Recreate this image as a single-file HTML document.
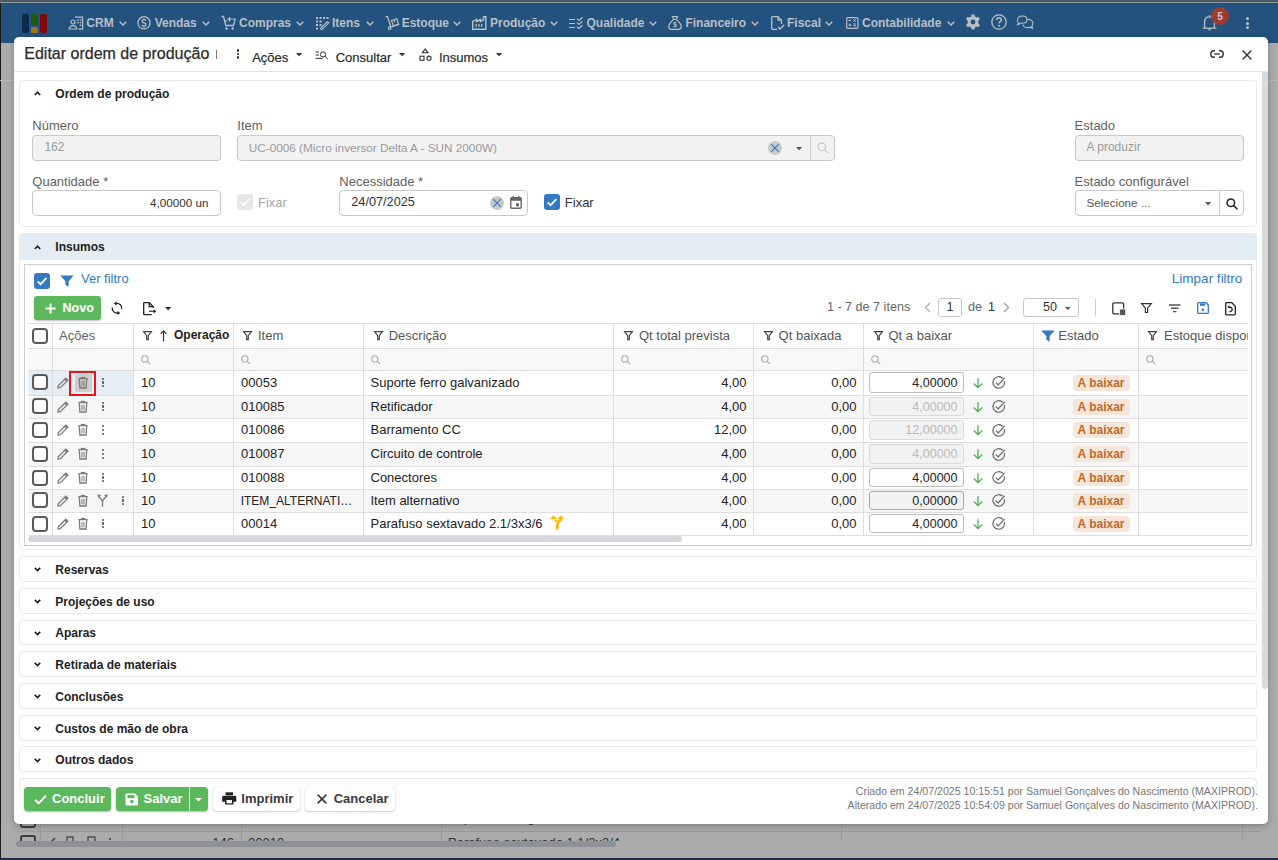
<!DOCTYPE html>
<html><head><meta charset="utf-8"><title>Editar ordem de produção</title>
<style>
html,body{margin:0;padding:0}
body{width:1278px;height:860px;overflow:hidden;position:relative;background:#ababab;font-family:"Liberation Sans", sans-serif}
.t{position:absolute;white-space:nowrap;line-height:1}
.b{position:absolute;box-sizing:border-box}
svg.b{overflow:visible}
</style></head><body>

<div class="b" style="left:0px;top:0px;width:1278px;height:2px;background:#4b5960"></div>
<div class="b" style="left:0px;top:2px;width:1278px;height:1px;background:#8d979c"></div>
<div class="b" style="left:0px;top:3px;width:1278px;height:40px;background:#24527e"></div>
<div class="b" style="left:16px;top:831px;width:1244px;height:1px;background:#999"></div>
<div class="b" style="left:40px;top:815px;width:1px;height:26px;background:#9b9b9b"></div>
<div class="b" style="left:122px;top:815px;width:1px;height:26px;background:#9b9b9b"></div>
<div class="b" style="left:241px;top:815px;width:1px;height:26px;background:#9b9b9b"></div>
<div class="b" style="left:441px;top:815px;width:1px;height:26px;background:#9b9b9b"></div>
<div class="b" style="left:841px;top:815px;width:1px;height:26px;background:#9b9b9b"></div>
<div class="b" style="left:1242px;top:815px;width:1px;height:26px;background:#9b9b9b"></div>
<div class="b" style="left:0;top:815px;width:1278px;height:26px;overflow:hidden">
<div class="b" style="left:20px;top:-2px;width:16px;height:15px;border:2px solid #3d3d3d;border-radius:3px"></div>
<div class="b" style="left:20px;top:20px;width:16px;height:15px;border:2px solid #3d3d3d;border-radius:3px"></div>
<div class="t" style="left:234.00px;top:21.00px;transform:translateX(-100%);font-size:13px;color:#2f2f2f;font-weight:normal;">146</div>
<div class="t" style="left:248.00px;top:21.00px;font-size:13px;color:#2f2f2f;font-weight:normal;">00010</div>
<div class="t" style="left:448.00px;top:21.00px;font-size:13px;color:#2f2f2f;font-weight:normal;">Parafuso sextavado 1 1/2x3/4</div>
<div class="t" style="left:448.00px;top:-4.00px;font-size:13px;color:#2f2f2f;font-weight:normal;">Suporte ferro galvanizado</div>
<svg class="b" style="left:48px;top:22px;" width="8" height="8" viewBox="0 0 8 8"><path d="M1 7 L7 1" stroke="#3d3d3d" stroke-width="1.5"/></svg>
<svg class="b" style="left:66px;top:21px;" width="8" height="8" viewBox="0 0 8 8"><rect x="1" y="1" width="6" height="7" fill="none" stroke="#3d3d3d" stroke-width="1.2"/></svg>
<svg class="b" style="left:87px;top:21px;" width="9" height="8" viewBox="0 0 9 8"><rect x="1" y="1" width="7" height="6" fill="none" stroke="#3d3d3d" stroke-width="1.2"/></svg>
<div class="b" style="left:109px;top:23px;width:2px;height:2px;background:#3d3d3d;border-radius:50%"></div>
</div>
<div class="b" style="left:16px;top:841px;width:600px;height:6px;background:#8e9297;border-radius:3px"></div>
<div class="b" style="left:0px;top:3px;width:1px;height:857px;background:#1c1c1c"></div>
<div class="b" style="left:0px;top:858px;width:1278px;height:2px;background:#1c2b46"></div>
<div class="b" style="left:22px;top:13.5px;width:7px;height:19.0px;background:#0c2a4b;border-radius:2px"></div>
<div class="b" style="left:31px;top:13.5px;width:7px;height:11.7px;background:#1f5a12;border-radius:2px"></div>
<div class="b" style="left:31px;top:27px;width:7px;height:5.5px;background:#a3721a;border-radius:1px"></div>
<div class="b" style="left:40px;top:13.5px;width:7px;height:19.0px;background:#820808;border-radius:2px"></div>
<div class="t" style="left:86.30px;top:17.14px;font-size:12px;color:#b8bfc7;font-weight:bold;">CRM</div>
<svg class="b" style="left:118.7px;top:21px;" width="8" height="5" viewBox="0 0 8 5"><path d="M0.7 0.7 L4 4 L7.3 0.7" fill="none" stroke="#b8bfc7" stroke-width="1.5"/></svg>
<div class="t" style="left:154.70px;top:17.14px;font-size:12px;color:#b8bfc7;font-weight:bold;">Vendas</div>
<svg class="b" style="left:202px;top:21px;" width="8" height="5" viewBox="0 0 8 5"><path d="M0.7 0.7 L4 4 L7.3 0.7" fill="none" stroke="#b8bfc7" stroke-width="1.5"/></svg>
<div class="t" style="left:239.00px;top:17.14px;font-size:12px;color:#b8bfc7;font-weight:bold;">Compras</div>
<svg class="b" style="left:295.5px;top:21px;" width="8" height="5" viewBox="0 0 8 5"><path d="M0.7 0.7 L4 4 L7.3 0.7" fill="none" stroke="#b8bfc7" stroke-width="1.5"/></svg>
<div class="t" style="left:332.00px;top:17.14px;font-size:12px;color:#b8bfc7;font-weight:bold;">Itens</div>
<svg class="b" style="left:365.6px;top:21px;" width="8" height="5" viewBox="0 0 8 5"><path d="M0.7 0.7 L4 4 L7.3 0.7" fill="none" stroke="#b8bfc7" stroke-width="1.5"/></svg>
<div class="t" style="left:401.70px;top:17.14px;font-size:12px;color:#b8bfc7;font-weight:bold;">Estoque</div>
<svg class="b" style="left:453px;top:21px;" width="8" height="5" viewBox="0 0 8 5"><path d="M0.7 0.7 L4 4 L7.3 0.7" fill="none" stroke="#b8bfc7" stroke-width="1.5"/></svg>
<div class="t" style="left:490.00px;top:17.14px;font-size:12px;color:#b8bfc7;font-weight:bold;">Produção</div>
<svg class="b" style="left:549.5px;top:21px;" width="8" height="5" viewBox="0 0 8 5"><path d="M0.7 0.7 L4 4 L7.3 0.7" fill="none" stroke="#b8bfc7" stroke-width="1.5"/></svg>
<div class="t" style="left:586.50px;top:17.14px;font-size:12px;color:#b8bfc7;font-weight:bold;">Qualidade</div>
<svg class="b" style="left:648.8px;top:21px;" width="8" height="5" viewBox="0 0 8 5"><path d="M0.7 0.7 L4 4 L7.3 0.7" fill="none" stroke="#b8bfc7" stroke-width="1.5"/></svg>
<div class="t" style="left:685.40px;top:17.14px;font-size:12px;color:#b8bfc7;font-weight:bold;">Financeiro</div>
<svg class="b" style="left:750.5px;top:21px;" width="8" height="5" viewBox="0 0 8 5"><path d="M0.7 0.7 L4 4 L7.3 0.7" fill="none" stroke="#b8bfc7" stroke-width="1.5"/></svg>
<div class="t" style="left:787.00px;top:17.14px;font-size:12px;color:#b8bfc7;font-weight:bold;">Fiscal</div>
<svg class="b" style="left:825px;top:21px;" width="8" height="5" viewBox="0 0 8 5"><path d="M0.7 0.7 L4 4 L7.3 0.7" fill="none" stroke="#b8bfc7" stroke-width="1.5"/></svg>
<div class="t" style="left:862.00px;top:17.14px;font-size:12px;color:#b8bfc7;font-weight:bold;">Contabilidade</div>
<svg class="b" style="left:946.8px;top:21px;" width="8" height="5" viewBox="0 0 8 5"><path d="M0.7 0.7 L4 4 L7.3 0.7" fill="none" stroke="#b8bfc7" stroke-width="1.5"/></svg>
<svg class="b" style="left:68px;top:16px;" width="16" height="14" viewBox="0 0 16 14"><g fill="none" stroke="#b8bfc7" stroke-width="1.2"><circle cx="5" cy="6" r="2"/><path d="M1.2 13 Q1.5 9.6 5 9.6 Q8.5 9.6 8.8 13 Z"/><path d="M7 1.2 H14.6 V13.2 H10.5"/></g><g fill="#b8bfc7"><rect x="9.3" y="3.4" width="1.6" height="1.3"/><rect x="11.8" y="3.4" width="1.6" height="1.3"/><rect x="9.3" y="6" width="1.6" height="1.3"/><rect x="11.8" y="6" width="1.6" height="1.3"/><rect x="11.8" y="8.6" width="1.6" height="1.3"/></g></svg>
<svg class="b" style="left:137px;top:16px;" width="14" height="14" viewBox="0 0 14 14"><circle cx="7" cy="6.8" r="6.1" fill="none" stroke="#b8bfc7" stroke-width="1.3"/><path d="M9 4.6 Q8.6 3.6 7 3.6 Q5 3.6 5 5.2 Q5 6.4 7 6.8 Q9 7.2 9 8.6 Q9 10.2 7 10.2 Q5.3 10.2 4.9 9" fill="none" stroke="#b8bfc7" stroke-width="1.2"/><path d="M7 2.4 V3.6 M7 10.2 V11.4" stroke="#b8bfc7" stroke-width="1.2"/></svg>
<svg class="b" style="left:221px;top:15px;" width="15" height="15" viewBox="0 0 15 15"><g fill="none" stroke="#b8bfc7" stroke-width="1.3"><path d="M0.5 1.5 H2.5 L4.8 10.5 H12.5 L14 4.2 H11.5"/><path d="M3.5 6 H6"/><path d="M8.5 2 V6.5 M6.3 4.2 H10.7"/></g><circle cx="5.5" cy="13.5" r="1.2" fill="#b8bfc7"/><circle cx="11.8" cy="13.5" r="1.2" fill="#b8bfc7"/></svg>
<svg class="b" style="left:316px;top:17px;" width="13" height="13" viewBox="0 0 13 13"><g fill="#b8bfc7"><rect x="0" y="0" width="2" height="2"/><rect x="3.5" y="0" width="2" height="2"/><rect x="7" y="0" width="2" height="2"/><rect x="10.5" y="0" width="2" height="2"/><rect x="0" y="3.5" width="2" height="2"/><rect x="3.5" y="3.5" width="2" height="2"/><rect x="0" y="7" width="2" height="2"/><rect x="0" y="10.5" width="2" height="2"/><rect x="3.5" y="7" width="2" height="2"/></g><path d="M4.5 11.5 L11.5 4.5 L12.8 5.8 L5.8 12.8 Z" fill="none" stroke="#b8bfc7" stroke-width="1.1"/></svg>
<svg class="b" style="left:385px;top:16px;" width="15" height="14" viewBox="0 0 15 14"><g fill="none" stroke="#b8bfc7" stroke-width="1.2"><path d="M0.5 0.8 L2.5 0.5 L5.8 11"/><circle cx="4.6" cy="12.2" r="1.3"/><path d="M6 11 L14.2 8.4"/><path d="M6.5 4.5 L11.8 2.8 L13.6 8.2 L8.3 9.9 Z"/><path d="M9 3.7 L9.8 6.2"/></g></svg>
<svg class="b" style="left:472px;top:16px;" width="15" height="14" viewBox="0 0 15 14"><g fill="none" stroke="#b8bfc7" stroke-width="1.4"><path d="M0.7 13.3 V5.5 L4.5 3.5 V5.5 L8.5 3.5 V5.5 L11.5 3.8 V0.7 H13.8 V13.3 Z"/></g><g fill="#b8bfc7"><rect x="3.5" y="8" width="1.3" height="2.8"/><rect x="6.3" y="8" width="1.3" height="2.8"/><rect x="9.1" y="8" width="1.3" height="2.8"/></g></svg>
<svg class="b" style="left:569px;top:17px;" width="15" height="13" viewBox="0 0 15 13"><g fill="none" stroke="#b8bfc7" stroke-width="1.2"><path d="M0 2.5 H6 M0 6.5 H6 M0 10.5 H6"/><path d="M8 1.6 L10 3.4 L13.5 0.3 M8 5.6 L10 7.4 L13.5 4.3 M8 9.6 L10 11.4 L13.5 8.3"/></g></svg>
<svg class="b" style="left:668px;top:16px;" width="14" height="14" viewBox="0 0 14 14"><g fill="none" stroke="#b8bfc7" stroke-width="1.2"><path d="M4.5 0.7 H9.5 L8.3 3.5 H5.7 Z"/><path d="M5.7 3.5 Q0.6 7.5 0.8 11 Q1 13.3 3.5 13.3 H10.5 Q13 13.3 13.2 11 Q13.4 7.5 8.3 3.5"/></g><text x="7" y="11.2" font-size="7" font-weight="bold" text-anchor="middle" fill="#b8bfc7" font-family="Liberation Sans">$</text></svg>
<svg class="b" style="left:771px;top:16px;" width="14" height="14" viewBox="0 0 14 14"><g fill="none" stroke="#b8bfc7" stroke-width="1.3"><path d="M6 13.3 H1.5 Q0.7 13.3 0.7 12.5 V1.5 Q0.7 0.7 1.5 0.7 H7 L10.5 4.2 V8"/><path d="M7 0.7 V4.2 H10.5"/><path d="M7 11 L9 13 L13.3 8.8"/></g></svg>
<svg class="b" style="left:846px;top:17px;" width="13" height="12" viewBox="0 0 13 12"><rect x="0.7" y="0.7" width="11.3" height="10.6" rx="1" fill="none" stroke="#b8bfc7" stroke-width="1.2"/><g stroke="#b8bfc7" stroke-width="1"><path d="M2.5 3.5 H5 M7.5 2.3 L9.8 4.7 M9.8 2.3 L7.5 4.7 M2.5 8 H5.3 M3.9 6.6 V9.4 M7.3 7 H10 M7.3 8.9 H10"/></g></svg>
<svg class="b" style="left:965px;top:14px;" width="16" height="16" viewBox="0 0 16 16"><path fill="#b8bfc7" d="M6.6 0.5 H9.4 L9.9 2.6 Q10.8 3 11.5 3.5 L13.5 2.8 L14.9 5.2 L13.3 6.6 Q13.4 8 13.3 9.4 L14.9 10.8 L13.5 13.2 L11.5 12.5 Q10.8 13 9.9 13.4 L9.4 15.5 H6.6 L6.1 13.4 Q5.2 13 4.5 12.5 L2.5 13.2 L1.1 10.8 L2.7 9.4 Q2.6 8 2.7 6.6 L1.1 5.2 L2.5 2.8 L4.5 3.5 Q5.2 3 6.1 2.6 Z M8 5.6 A2.4 2.4 0 1 0 8 10.4 A2.4 2.4 0 1 0 8 5.6 Z"/></svg>
<svg class="b" style="left:991px;top:14px;" width="16" height="16" viewBox="0 0 16 16"><circle cx="8" cy="8" r="7.2" fill="none" stroke="#b8bfc7" stroke-width="1.3"/><path d="M5.6 6 Q5.6 3.8 8 3.8 Q10.4 3.8 10.4 5.8 Q10.4 7.2 8.8 7.8 Q8 8.2 8 9.5" fill="none" stroke="#b8bfc7" stroke-width="1.5"/><circle cx="8" cy="11.7" r="1" fill="#b8bfc7"/></svg>
<svg class="b" style="left:1017px;top:15px;" width="17" height="14" viewBox="0 0 17 14"><g fill="none" stroke="#b8bfc7" stroke-width="1.1"><path d="M2 9.5 Q0.5 8 0.5 5.5 Q0.5 1 5.5 1 Q10 1 10 4.5 Q10 8.3 5.5 8.3 Q4 8.3 3 8 L0.8 9.6 Z"/><path d="M10.2 4.2 Q15.8 4.3 15.8 8.3 Q15.8 10.3 14.8 11.2 L15.6 13.2 L12.8 12.2 Q11.8 12.6 10.3 12.6 Q6.5 12.6 6 9.5"/></g></svg>
<svg class="b" style="left:1202px;top:14px;" width="15" height="18" viewBox="0 0 15 18"><g fill="none" stroke="#b8bfc7" stroke-width="1.3"><path d="M7.5 1 V2.5"/><path d="M2.6 14 V8 Q2.6 2.8 7.5 2.8 Q12.4 2.8 12.4 8 V14"/><path d="M0.6 14.2 H14.4"/></g><path d="M5.8 15.2 Q7.5 17.6 9.2 15.2 Z" fill="#b8bfc7"/></svg>
<div class="b" style="left:1211px;top:7px;width:18px;height:18px;border-radius:50%;background:#9d3b35"></div>
<div class="t" style="left:1220.00px;top:11.54px;font-size:10px;color:#d5c6c4;font-weight:bold;transform:translateX(-50%)">5</div>
<div class="b" style="left:1245.5px;top:17.1px;width:3px;height:3px;border-radius:50%;background:#b8bfc7"></div>
<div class="b" style="left:1245.5px;top:21.7px;width:3px;height:3px;border-radius:50%;background:#b8bfc7"></div>
<div class="b" style="left:1245.5px;top:26.3px;width:3px;height:3px;border-radius:50%;background:#b8bfc7"></div>
<div class="b" style="left:0px;top:80px;width:14px;height:1px;background:#b9b9b9"></div>
<div class="b" style="left:1268px;top:80px;width:10px;height:1px;background:#b9b9b9"></div>
<div class="b" style="left:14px;top:37px;width:1254px;height:787px;background:#fff;border-radius:5px;box-shadow:0 2px 6px rgba(0,0,0,.25)"></div>
<div class="t" style="left:24.30px;top:46.06px;font-size:16px;color:#2b2b2b;font-weight:normal;-webkit-text-stroke:0.25px #2b2b2b">Editar ordem de produção</div>
<div class="b" style="left:216px;top:50px;width:1px;height:9px;background:#777"></div>
<div class="b" style="left:236.6px;top:49.0px;width:2.5px;height:2.5px;border-radius:50%;background:#333"></div>
<div class="b" style="left:236.6px;top:52.699999999999996px;width:2.5px;height:2.5px;border-radius:50%;background:#333"></div>
<div class="b" style="left:236.6px;top:56.4px;width:2.5px;height:2.5px;border-radius:50%;background:#333"></div>
<svg class="b" style="left:295.8px;top:53.2px;" width="6.2" height="3.2" viewBox="0 0 6.2 3.2"><path d="M0 0 H6.2 L3.1 3.2 Z" fill="#333"/></svg>
<svg class="b" style="left:398.9px;top:53.2px;" width="6.2" height="3.2" viewBox="0 0 6.2 3.2"><path d="M0 0 H6.2 L3.1 3.2 Z" fill="#333"/></svg>
<svg class="b" style="left:496.1px;top:53.2px;" width="6.2" height="3.2" viewBox="0 0 6.2 3.2"><path d="M0 0 H6.2 L3.1 3.2 Z" fill="#333"/></svg>
<svg class="b" style="left:314.5px;top:50.5px;" width="14" height="9" viewBox="0 0 14 9"><g fill="none" stroke="#333" stroke-width="1"><path d="M0.5 1 H4 M0.5 4 H4 M0.5 7.4 H7.5"/><circle cx="8" cy="3.4" r="2.6"/><path d="M10 5.3 L12.8 8"/></g></svg>
<svg class="b" style="left:418.5px;top:47.5px;" width="13" height="13" viewBox="0 0 13 13"><g fill="none" stroke="#333" stroke-width="1.1"><path d="M6.2 1 L9 4.8 H3.4 Z"/><rect x="1" y="8.2" width="4" height="4"/><circle cx="10" cy="10.2" r="2.1"/></g></svg>
<svg class="b" style="left:1209.5px;top:50px;" width="14" height="8" viewBox="0 0 14 8"><g fill="none" stroke="#333" stroke-width="1.4"><path d="M5 0.8 H3.6 Q0.8 0.8 0.8 4 Q0.8 7.2 3.6 7.2 H5"/><path d="M9 0.8 H10.4 Q13.2 0.8 13.2 4 Q13.2 7.2 10.4 7.2 H9"/><path d="M4.2 4 H9.8"/></g></svg>
<svg class="b" style="left:1241.5px;top:49.5px;" width="10" height="10" viewBox="0 0 10 10"><path d="M0.6 0.6 L9.4 9.4 M9.4 0.6 L0.6 9.4" stroke="#333" stroke-width="1.4"/></svg>
<div class="t" style="left:252.20px;top:50.80px;font-size:13px;color:#2b2b2b;font-weight:normal;-webkit-text-stroke:0.2px #2b2b2b">Ações</div>
<div class="t" style="left:335.70px;top:50.80px;font-size:13px;color:#2b2b2b;font-weight:normal;-webkit-text-stroke:0.2px #2b2b2b">Consultar</div>
<div class="t" style="left:438.90px;top:50.80px;font-size:13px;color:#2b2b2b;font-weight:normal;-webkit-text-stroke:0.2px #2b2b2b">Insumos</div>
<div class="b" style="left:14px;top:71px;width:1254px;height:1px;background:#e3e3e3"></div>
<div class="b" style="left:1262px;top:72px;width:6px;height:617px;background:#d6dbe0;border-radius:0 0 3px 3px"></div>
<div class="b" style="left:19px;top:80px;width:1238px;height:147px;border:1px solid #ebebeb;border-radius:4px;background:#fff"></div>
<!--CHEV1-->
<div class="t" style="left:55.30px;top:87.84px;font-size:12px;color:#222;font-weight:bold;">Ordem de produção</div>
<div class="t" style="left:32.30px;top:119.00px;font-size:13px;color:#5f5f5f;font-weight:normal;">Número</div>
<div class="t" style="left:237.30px;top:119.00px;font-size:13px;color:#5f5f5f;font-weight:normal;">Item</div>
<div class="t" style="left:1074.60px;top:119.00px;font-size:13px;color:#5f5f5f;font-weight:normal;">Estado</div>
<div class="b" style="left:32px;top:135px;width:189px;height:26px;background:#f2f2f2;border:1px solid #c9c9c9;border-radius:4px"></div>
<div class="t" style="left:44.40px;top:141.44px;font-size:12px;color:#9a9a9a;font-weight:normal;">162</div>
<div class="b" style="left:237px;top:135px;width:598px;height:26px;background:#f2f2f2;border:1px solid #c9c9c9;border-radius:4px"></div>
<div class="b" style="left:810px;top:135px;width:1px;height:26px;background:#c9c9c9"></div>
<div class="t" style="left:248.80px;top:141.65px;font-size:11.75px;color:#9a9a9a;font-weight:normal;">UC-0006 (Micro inversor Delta A - SUN 2000W)</div>
<div class="b" style="left:1075px;top:135px;width:169px;height:26px;background:#f2f2f2;border:1px solid #c9c9c9;border-radius:4px"></div>
<div class="t" style="left:1086.60px;top:141.44px;font-size:12px;color:#9a9a9a;font-weight:normal;">A produzir</div>
<div class="t" style="left:32.30px;top:175.30px;font-size:13px;color:#5f5f5f;font-weight:normal;">Quantidade *</div>
<div class="t" style="left:339.30px;top:175.30px;font-size:13px;color:#5f5f5f;font-weight:normal;">Necessidade *</div>
<div class="t" style="left:1074.60px;top:175.30px;font-size:13px;color:#5f5f5f;font-weight:normal;">Estado configurável</div>
<div class="b" style="left:32px;top:190px;width:189px;height:26px;background:#fff;border:1px solid #c9c9c9;border-radius:4px"></div>
<div class="t" style="left:208.50px;top:197.10px;transform:translateX(-100%);font-size:11.7px;color:#333;font-weight:normal;">4,00000 un</div>
<div class="b" style="left:237px;top:194px;width:16px;height:16px;background:#e6e6e6;border-radius:3px"></div>
<div class="t" style="left:258.00px;top:196.00px;font-size:13px;color:#a8a8a8;font-weight:normal;">Fixar</div>
<div class="b" style="left:339px;top:190px;width:189px;height:26px;background:#fff;border:1px solid #c9c9c9;border-radius:4px"></div>
<div class="t" style="left:351.30px;top:196.25px;font-size:12.7px;color:#333;font-weight:normal;">24/07/2025</div>
<div class="b" style="left:544px;top:194px;width:16px;height:16px;background:#3479c1;border-radius:3px"></div>
<div class="t" style="left:564.80px;top:196.00px;font-size:13px;color:#333;font-weight:normal;">Fixar</div>
<div class="b" style="left:1075px;top:190px;width:169px;height:26px;background:#fff;border:1px solid #c9c9c9;border-radius:4px"></div>
<div class="b" style="left:1219px;top:190px;width:1px;height:26px;background:#c9c9c9"></div>
<div class="t" style="left:1086.60px;top:197.18px;font-size:11.6px;color:#555;font-weight:normal;">Selecione ...</div>
<svg class="b" style="left:33.6px;top:91.3px;" width="7" height="5" viewBox="0 0 7 5"><path d="M0.8 4 L3.5 1.2 L6.2 4" fill="none" stroke="#222" stroke-width="1.7"/></svg>
<svg class="b" style="left:768px;top:140.5px;" width="14" height="14" viewBox="0 0 14 14"><circle cx="7" cy="7" r="7" fill="#c9c9c9"/><path d="M3.2 3.2 L10.8 10.8 M10.8 3.2 L3.2 10.8" stroke="#3479c1" stroke-width="1.15"/></svg>
<svg class="b" style="left:489.5px;top:196px;" width="14" height="14" viewBox="0 0 14 14"><circle cx="7" cy="7" r="7" fill="#c9c9c9"/><path d="M3.2 3.2 L10.8 10.8 M10.8 3.2 L3.2 10.8" stroke="#3479c1" stroke-width="1.15"/></svg>
<svg class="b" style="left:796px;top:146.7px;" width="6.2" height="3.3" viewBox="0 0 6.2 3.3"><path d="M0 0 H6.2 L3.1 3.3 Z" fill="#555"/></svg>
<svg class="b" style="left:816.5px;top:141.5px;" width="12" height="12" viewBox="0 0 12 12"><g fill="none" stroke="#cdcdcd" stroke-width="1.3"><circle cx="4.8" cy="4.8" r="3.8"/><path d="M7.6 7.6 L11.3 11.3"/></g></svg>
<svg class="b" style="left:510px;top:196px;" width="12" height="13" viewBox="0 0 12 13"><rect x="0.8" y="1.8" width="10.4" height="10.4" rx="1" fill="none" stroke="#666" stroke-width="1.4"/><rect x="0.8" y="1.8" width="10.4" height="3" fill="#666"/><rect x="2.6" y="0" width="1.2" height="2" fill="#666"/><rect x="8.2" y="0" width="1.2" height="2" fill="#666"/><rect x="6.2" y="7.3" width="2.7" height="3" fill="#555"/></svg>
<svg class="b" style="left:237px;top:194px;" width="16" height="16" viewBox="0 0 16 16"><path d="M3.6 8.3 L6.6 11.2 L12.4 5" fill="none" stroke="#fff" stroke-width="1.8"/></svg>
<svg class="b" style="left:544px;top:194px;" width="16" height="16" viewBox="0 0 16 16"><path d="M3.6 8.3 L6.6 11.2 L12.4 5" fill="none" stroke="#fff" stroke-width="1.8"/></svg>
<svg class="b" style="left:1205px;top:201.5px;" width="6.2" height="3.4" viewBox="0 0 6.2 3.4"><path d="M0 0 H6.2 L3.1 3.4 Z" fill="#555"/></svg>
<svg class="b" style="left:1225.5px;top:197.5px;" width="13" height="12" viewBox="0 0 13 12"><g fill="none" stroke="#222" stroke-width="1.5"><circle cx="4.8" cy="4.8" r="3.8"/><path d="M7.6 7.6 L11.5 11.3"/></g></svg>
<div class="b" style="left:19px;top:233px;width:1238px;height:317px;border:1px solid #ebebeb;border-radius:4px;background:#fff"></div>
<div class="b" style="left:19px;top:233px;width:1238px;height:27px;background:#e3edf3;border-radius:4px 4px 0 0"></div>
<div class="t" style="left:55.30px;top:240.84px;font-size:12px;color:#222;font-weight:bold;">Insumos</div>
<svg class="b" style="left:33.6px;top:244.8px;" width="7" height="5" viewBox="0 0 7 5"><path d="M0.8 4 L3.5 1.2 L6.2 4" fill="none" stroke="#222" stroke-width="1.7"/></svg>
<div class="b" style="left:24px;top:264px;width:1228px;height:282px;border:1px solid #cdcdcd;background:#fff"></div>
<div class="b" style="left:34px;top:273px;width:16px;height:16px;background:#3479c1;border-radius:3px"></div>
<div class="t" style="left:81.00px;top:271.80px;font-size:13px;color:#3479c1;font-weight:normal;">Ver filtro</div>
<div class="t" style="left:1242.40px;top:271.77px;transform:translateX(-100%);font-size:13.5px;color:#3479c1;font-weight:normal;">Limpar filtro</div>
<div class="b" style="left:34px;top:296px;width:67px;height:24px;background:#5cb85c;border-radius:3px;box-shadow:0 1px 2px rgba(0,0,0,.25)"></div>
<div class="t" style="left:62.60px;top:302.22px;font-size:12.5px;color:#fff;font-weight:bold;">Novo</div>
<div class="t" style="left:826.90px;top:300.53px;font-size:12.6px;color:#666;font-weight:normal;">1 - 7 de 7 itens</div>
<div class="b" style="left:938px;top:298px;width:24px;height:19px;border:1px solid #c9c9c9;border-radius:3px"></div>
<div class="t" style="left:950.00px;top:300.53px;font-size:12.6px;color:#333;font-weight:normal;transform:translateX(-50%)">1</div>
<div class="t" style="left:968.00px;top:300.53px;font-size:12.6px;color:#666;font-weight:normal;">de</div>
<div class="t" style="left:988.00px;top:300.53px;font-size:12.6px;color:#333;font-weight:normal;">1</div>
<div class="b" style="left:1023px;top:298px;width:56px;height:19px;border:1px solid #c9c9c9;border-radius:3px"></div>
<div class="t" style="left:1043.00px;top:300.53px;font-size:12.6px;color:#333;font-weight:normal;">50</div>
<div class="b" style="left:1095px;top:299px;width:1px;height:17px;background:#ccc"></div>
<svg class="b" style="left:34px;top:273px;" width="16" height="16" viewBox="0 0 16 16"><path d="M3.6 8.3 L6.6 11.2 L12.4 5" fill="none" stroke="#fff" stroke-width="1.8"/></svg>
<svg class="b" style="left:60px;top:275px;" width="14" height="12" viewBox="0 0 14 12"><path d="M0.3 0.5 H13.7 L8.6 6.2 V11.8 L5.4 9.8 V6.2 Z" fill="#3479c1"/></svg>
<svg class="b" style="left:45px;top:302.5px;" width="11" height="11" viewBox="0 0 11 11"><path d="M5.5 0.5 V10.5 M0.5 5.5 H10.5" stroke="#fff" stroke-width="1.9"/></svg>
<svg class="b" style="left:110.5px;top:301px;" width="12" height="14.5" viewBox="0 0 12 14.5"><g fill="none" stroke="#222" stroke-width="1.3"><path d="M5.17 2.47 A4.8 4.8 0 0 1 10.73 8.03"/><path d="M6.83 11.93 A4.8 4.8 0 0 1 1.27 6.37"/></g><path d="M2.7 2.5 L5.6 0.5 L5.6 4.5 Z M9.3 11.9 L6.4 9.9 L6.4 13.9 Z" fill="#222"/></svg>
<svg class="b" style="left:143px;top:301.5px;" width="14" height="14" viewBox="0 0 14 14"><g fill="none" stroke="#222" stroke-width="1.3"><path d="M8.8 12.7 H1.4 Q0.7 12.7 0.7 12 V1.4 Q0.7 0.7 1.4 0.7 H6.3 L10.3 4.7 V6"/><path d="M6.2 0.7 V4.7 H10.3"/></g><path d="M6 9.3 H11" stroke="#444" stroke-width="1.3"/><path d="M10.6 7.2 L13.4 9.3 L10.6 11.4 Z" fill="#222"/></svg>
<svg class="b" style="left:165.4px;top:306.8px;" width="6.3" height="3.3" viewBox="0 0 6.3 3.3"><path d="M0 0 H6.3 L3.15 3.3 Z" fill="#222"/></svg>
<svg class="b" style="left:924px;top:302px;" width="8" height="11" viewBox="0 0 8 11"><path d="M6 1 L1.5 5.5 L6 10" fill="none" stroke="#aaa" stroke-width="1.1"/></svg>
<svg class="b" style="left:1002px;top:302px;" width="8" height="11" viewBox="0 0 8 11"><path d="M2 1 L6.5 5.5 L2 10" fill="none" stroke="#999" stroke-width="1.2"/></svg>
<svg class="b" style="left:1064.6px;top:306.8px;" width="5.6" height="3" viewBox="0 0 5.6 3"><path d="M0 0 H5.6 L2.8 3 Z" fill="#555"/></svg>
<svg class="b" style="left:1112px;top:302px;" width="14" height="14" viewBox="0 0 14 14"><rect x="0.8" y="0.8" width="10.8" height="11" rx="1" fill="none" stroke="#333" stroke-width="1.3"/><rect x="7.6" y="7" width="6" height="6.5" rx="1.2" fill="#555" stroke="#fff" stroke-width="0.8"/></svg>
<svg class="b" style="left:1141px;top:303px;" width="11" height="10" viewBox="0 0 11 10"><path d="M0.7 0.7 H10.3 L6.6 5.2 V9.5 H4.4 V5.2 Z" fill="none" stroke="#333" stroke-width="1.2"/></svg>
<svg class="b" style="left:1168.5px;top:303.5px;" width="12" height="9" viewBox="0 0 12 9"><path d="M0 1 H11.5 M2 4.2 H9.5 M4 7.6 H7.5" stroke="#555" stroke-width="1.4"/></svg>
<svg class="b" style="left:1196.5px;top:302px;" width="12" height="12" viewBox="0 0 12 12"><path d="M1.5 0.7 H9 L11.3 3 V10.5 Q11.3 11.3 10.5 11.3 H1.5 Q0.7 11.3 0.7 10.5 V1.5 Q0.7 0.7 1.5 0.7 Z" fill="none" stroke="#3479c1" stroke-width="1.3"/><rect x="3" y="1.4" width="5" height="2.4" fill="#3479c1"/><circle cx="6" cy="7.8" r="1.3" fill="#3479c1"/></svg>
<svg class="b" style="left:1225px;top:301.5px;" width="11" height="13.5" viewBox="0 0 11 13.5"><g fill="none" stroke="#222" stroke-width="1.3"><path d="M1.4 0.7 H6.8 L10.3 4.2 V12 Q10.3 12.8 9.5 12.8 H1.4 Q0.7 12.8 0.7 12 V1.4 Q0.7 0.7 1.4 0.7 Z"/><path d="M3.5 5.5 Q6.8 4.5 7.2 7.3 Q7.3 9.6 4.5 9.5"/></g><path d="M2.3 4.5 L4.6 3.5 L4.3 6.8 Z" fill="#222"/></svg>
<div class="b" style="left:28px;top:323px;width:1220px;height:219px;overflow:hidden">
<div class="b" style="left:0px;top:25px;width:1372px;height:22px;background:#f8f8f8"></div>
<div class="b" style="left:0px;top:72px;width:1372px;height:23px;background:#f6f6f6"></div>
<div class="b" style="left:0px;top:119px;width:1372px;height:24px;background:#f6f6f6"></div>
<div class="b" style="left:0px;top:166px;width:1372px;height:23px;background:#f6f6f6"></div>
<div class="b" style="left:0px;top:47px;width:105px;height:25px;background:#e4eef4"></div>
<div class="b" style="left:0px;top:0px;width:1372px;height:1px;background:#dedede"></div>
<div class="b" style="left:0px;top:25px;width:1372px;height:1px;background:#dedede"></div>
<div class="b" style="left:0px;top:47px;width:1372px;height:1px;background:#dedede"></div>
<div class="b" style="left:0px;top:72px;width:1372px;height:1px;background:#dedede"></div>
<div class="b" style="left:0px;top:95px;width:1372px;height:1px;background:#dedede"></div>
<div class="b" style="left:0px;top:119px;width:1372px;height:1px;background:#dedede"></div>
<div class="b" style="left:0px;top:143px;width:1372px;height:1px;background:#dedede"></div>
<div class="b" style="left:0px;top:166px;width:1372px;height:1px;background:#dedede"></div>
<div class="b" style="left:0px;top:189px;width:1372px;height:1px;background:#dedede"></div>
<div class="b" style="left:0px;top:212px;width:1372px;height:1px;background:#dedede"></div>
<div class="b" style="left:24px;top:0px;width:1px;height:212px;background:#dedede"></div>
<div class="b" style="left:105px;top:0px;width:1px;height:212px;background:#dedede"></div>
<div class="b" style="left:205px;top:0px;width:1px;height:212px;background:#dedede"></div>
<div class="b" style="left:335px;top:0px;width:1px;height:212px;background:#dedede"></div>
<div class="b" style="left:585px;top:0px;width:1px;height:212px;background:#dedede"></div>
<div class="b" style="left:725px;top:0px;width:1px;height:212px;background:#dedede"></div>
<div class="b" style="left:835px;top:0px;width:1px;height:212px;background:#dedede"></div>
<div class="b" style="left:1005px;top:0px;width:1px;height:212px;background:#dedede"></div>
<div class="b" style="left:1110px;top:0px;width:1px;height:212px;background:#dedede"></div>
<div class="t" style="left:31.00px;top:5.60px;font-size:13px;color:#666;font-weight:normal;">Ações</div>
<div class="t" style="left:146.00px;top:6.44px;font-size:12px;color:#222;font-weight:bold;">Operação</div>
<div class="t" style="left:230.00px;top:5.60px;font-size:13px;color:#555;font-weight:normal;">Item</div>
<div class="t" style="left:360.70px;top:5.60px;font-size:13px;color:#555;font-weight:normal;">Descrição</div>
<div class="t" style="left:611.00px;top:5.60px;font-size:13px;color:#555;font-weight:normal;">Qt total prevista</div>
<div class="t" style="left:750.60px;top:5.60px;font-size:13px;color:#555;font-weight:normal;">Qt baixada</div>
<div class="t" style="left:860.50px;top:5.60px;font-size:13px;color:#555;font-weight:normal;">Qt a baixar</div>
<div class="t" style="left:1030.30px;top:5.60px;font-size:13px;color:#555;font-weight:normal;">Estado</div>
<div class="t" style="left:1136.00px;top:5.60px;font-size:13px;color:#555;font-weight:normal;">Estoque disponível</div>
<div class="t" style="left:113.00px;top:53.00px;font-size:13px;color:#222;font-weight:normal;">10</div>
<div class="t" style="left:213.00px;top:53.00px;font-size:13px;color:#222;font-weight:normal;">00053</div>
<div class="t" style="left:342.50px;top:53.00px;font-size:13px;color:#222;font-weight:normal;">Suporte ferro galvanizado</div>
<div class="t" style="left:718.50px;top:53.00px;transform:translateX(-100%);font-size:13px;color:#222;font-weight:normal;">4,00</div>
<div class="t" style="left:828.50px;top:53.00px;transform:translateX(-100%);font-size:13px;color:#222;font-weight:normal;">0,00</div>
<div class="b" style="left:841px;top:49px;width:95px;height:21px;background:#fff;border:1px solid #bdbdbd;border-radius:3px"></div>
<div class="t" style="left:929.50px;top:54.22px;transform:translateX(-100%);font-size:12.5px;color:#222;font-weight:normal;">4,00000</div>
<div class="b" style="left:1045px;top:51.5px;width:57px;height:16.0px;background:#f6e6da;border-radius:4px"></div>
<div class="t" style="left:1049.60px;top:53.84px;font-size:12px;color:#c2682a;font-weight:bold;">A baixar</div>
<div class="t" style="left:113.00px;top:76.80px;font-size:13px;color:#222;font-weight:normal;">10</div>
<div class="t" style="left:213.00px;top:76.80px;font-size:13px;color:#222;font-weight:normal;">010085</div>
<div class="t" style="left:342.50px;top:76.80px;font-size:13px;color:#222;font-weight:normal;">Retificador</div>
<div class="t" style="left:718.50px;top:76.80px;transform:translateX(-100%);font-size:13px;color:#222;font-weight:normal;">4,00</div>
<div class="t" style="left:828.50px;top:76.80px;transform:translateX(-100%);font-size:13px;color:#222;font-weight:normal;">0,00</div>
<div class="b" style="left:841px;top:74px;width:95px;height:19px;background:#f2f2f2;border:1px solid #dcdcdc;border-radius:3px"></div>
<div class="t" style="left:929.50px;top:78.02px;transform:translateX(-100%);font-size:12.5px;color:#b9b9b9;font-weight:normal;">4,00000</div>
<div class="b" style="left:1045px;top:75.5px;width:57px;height:16.0px;background:#f6e6da;border-radius:4px"></div>
<div class="t" style="left:1049.60px;top:77.64px;font-size:12px;color:#c2682a;font-weight:bold;">A baixar</div>
<div class="t" style="left:113.00px;top:99.80px;font-size:13px;color:#222;font-weight:normal;">10</div>
<div class="t" style="left:213.00px;top:99.80px;font-size:13px;color:#222;font-weight:normal;">010086</div>
<div class="t" style="left:342.50px;top:99.80px;font-size:13px;color:#222;font-weight:normal;">Barramento CC</div>
<div class="t" style="left:718.50px;top:99.80px;transform:translateX(-100%);font-size:13px;color:#222;font-weight:normal;">12,00</div>
<div class="t" style="left:828.50px;top:99.80px;transform:translateX(-100%);font-size:13px;color:#222;font-weight:normal;">0,00</div>
<div class="b" style="left:841px;top:97px;width:95px;height:20px;background:#f2f2f2;border:1px solid #dcdcdc;border-radius:3px"></div>
<div class="t" style="left:929.50px;top:101.02px;transform:translateX(-100%);font-size:12.5px;color:#b9b9b9;font-weight:normal;">12,00000</div>
<div class="b" style="left:1045px;top:99.0px;width:57px;height:16.0px;background:#f6e6da;border-radius:4px"></div>
<div class="t" style="left:1049.60px;top:100.64px;font-size:12px;color:#c2682a;font-weight:bold;">A baixar</div>
<div class="t" style="left:113.00px;top:123.80px;font-size:13px;color:#222;font-weight:normal;">10</div>
<div class="t" style="left:213.00px;top:123.80px;font-size:13px;color:#222;font-weight:normal;">010087</div>
<div class="t" style="left:342.50px;top:123.80px;font-size:13px;color:#222;font-weight:normal;">Circuito de controle</div>
<div class="t" style="left:718.50px;top:123.80px;transform:translateX(-100%);font-size:13px;color:#222;font-weight:normal;">4,00</div>
<div class="t" style="left:828.50px;top:123.80px;transform:translateX(-100%);font-size:13px;color:#222;font-weight:normal;">0,00</div>
<div class="b" style="left:841px;top:121px;width:95px;height:20px;background:#f2f2f2;border:1px solid #dcdcdc;border-radius:3px"></div>
<div class="t" style="left:929.50px;top:125.02px;transform:translateX(-100%);font-size:12.5px;color:#b9b9b9;font-weight:normal;">4,00000</div>
<div class="b" style="left:1045px;top:123.0px;width:57px;height:16.0px;background:#f6e6da;border-radius:4px"></div>
<div class="t" style="left:1049.60px;top:124.64px;font-size:12px;color:#c2682a;font-weight:bold;">A baixar</div>
<div class="t" style="left:113.00px;top:147.80px;font-size:13px;color:#222;font-weight:normal;">10</div>
<div class="t" style="left:213.00px;top:147.80px;font-size:13px;color:#222;font-weight:normal;">010088</div>
<div class="t" style="left:342.50px;top:147.80px;font-size:13px;color:#222;font-weight:normal;">Conectores</div>
<div class="t" style="left:718.50px;top:147.80px;transform:translateX(-100%);font-size:13px;color:#222;font-weight:normal;">4,00</div>
<div class="t" style="left:828.50px;top:147.80px;transform:translateX(-100%);font-size:13px;color:#222;font-weight:normal;">0,00</div>
<div class="b" style="left:841px;top:145px;width:95px;height:19px;background:#fff;border:1px solid #bdbdbd;border-radius:3px"></div>
<div class="t" style="left:929.50px;top:149.02px;transform:translateX(-100%);font-size:12.5px;color:#222;font-weight:normal;">4,00000</div>
<div class="b" style="left:1045px;top:146.5px;width:57px;height:16.0px;background:#f6e6da;border-radius:4px"></div>
<div class="t" style="left:1049.60px;top:148.64px;font-size:12px;color:#c2682a;font-weight:bold;">A baixar</div>
<div class="t" style="left:113.00px;top:170.80px;font-size:13px;color:#222;font-weight:normal;">10</div>
<div class="t" style="left:212.70px;top:171.64px;font-size:12px;color:#222;font-weight:normal;">ITEM_ALTERNATI…</div>
<div class="t" style="left:342.50px;top:170.80px;font-size:13px;color:#222;font-weight:normal;">Item alternativo</div>
<div class="t" style="left:718.50px;top:170.80px;transform:translateX(-100%);font-size:13px;color:#222;font-weight:normal;">4,00</div>
<div class="t" style="left:828.50px;top:170.80px;transform:translateX(-100%);font-size:13px;color:#222;font-weight:normal;">0,00</div>
<div class="b" style="left:841px;top:168px;width:95px;height:19px;background:#f2f2f2;border:1px solid #a9a9a9;border-radius:3px"></div>
<div class="t" style="left:929.50px;top:172.02px;transform:translateX(-100%);font-size:12.5px;color:#222;font-weight:normal;">0,00000</div>
<div class="b" style="left:1045px;top:169.5px;width:57px;height:16.0px;background:#f6e6da;border-radius:4px"></div>
<div class="t" style="left:1049.60px;top:171.64px;font-size:12px;color:#c2682a;font-weight:bold;">A baixar</div>
<div class="t" style="left:113.00px;top:193.80px;font-size:13px;color:#222;font-weight:normal;">10</div>
<div class="t" style="left:213.00px;top:193.80px;font-size:13px;color:#222;font-weight:normal;">00014</div>
<div class="t" style="left:342.50px;top:193.80px;font-size:13px;color:#222;font-weight:normal;">Parafuso sextavado 2.1/3x3/6</div>
<div class="t" style="left:718.50px;top:193.80px;transform:translateX(-100%);font-size:13px;color:#222;font-weight:normal;">4,00</div>
<div class="t" style="left:828.50px;top:193.80px;transform:translateX(-100%);font-size:13px;color:#222;font-weight:normal;">0,00</div>
<div class="b" style="left:841px;top:191px;width:95px;height:19px;background:#fff;border:1px solid #bdbdbd;border-radius:3px"></div>
<div class="t" style="left:929.50px;top:195.02px;transform:translateX(-100%);font-size:12.5px;color:#222;font-weight:normal;">4,00000</div>
<div class="b" style="left:1045px;top:192.5px;width:57px;height:16.0px;background:#f6e6da;border-radius:4px"></div>
<div class="t" style="left:1049.60px;top:194.64px;font-size:12px;color:#c2682a;font-weight:bold;">A baixar</div>
<div class="b" style="left:4px;top:5px;width:16px;height:16px;border:2px solid #5a5a5a;border-radius:4px;background:#fff"></div>
<svg class="b" style="left:115px;top:8px;" width="9" height="9" viewBox="0 0 9 9"><path d="M0.6 0.7 H8.4 L5.3 4.6 V8.6 H3.7 V4.6 Z" fill="none" stroke="#444" stroke-width="1.2"/></svg>
<svg class="b" style="left:131.5px;top:7px;" width="7" height="12" viewBox="0 0 7 12"><path d="M3.5 11.5 V1 M0.6 3.8 L3.5 0.8 L6.4 3.8" fill="none" stroke="#333" stroke-width="1.2"/></svg>
<svg class="b" style="left:215px;top:8px;" width="9" height="9" viewBox="0 0 9 9"><path d="M0.6 0.7 H8.4 L5.3 4.6 V8.6 H3.7 V4.6 Z" fill="none" stroke="#444" stroke-width="1.2"/></svg>
<svg class="b" style="left:345.5px;top:8px;" width="9" height="9" viewBox="0 0 9 9"><path d="M0.6 0.7 H8.4 L5.3 4.6 V8.6 H3.7 V4.6 Z" fill="none" stroke="#444" stroke-width="1.2"/></svg>
<svg class="b" style="left:595.5px;top:8px;" width="9" height="9" viewBox="0 0 9 9"><path d="M0.6 0.7 H8.4 L5.3 4.6 V8.6 H3.7 V4.6 Z" fill="none" stroke="#444" stroke-width="1.2"/></svg>
<svg class="b" style="left:735.8px;top:8px;" width="9" height="9" viewBox="0 0 9 9"><path d="M0.6 0.7 H8.4 L5.3 4.6 V8.6 H3.7 V4.6 Z" fill="none" stroke="#444" stroke-width="1.2"/></svg>
<svg class="b" style="left:845.5px;top:8px;" width="9" height="9" viewBox="0 0 9 9"><path d="M0.6 0.7 H8.4 L5.3 4.6 V8.6 H3.7 V4.6 Z" fill="none" stroke="#444" stroke-width="1.2"/></svg>
<svg class="b" style="left:1120px;top:8px;" width="9" height="9" viewBox="0 0 9 9"><path d="M0.6 0.7 H8.4 L5.3 4.6 V8.6 H3.7 V4.6 Z" fill="none" stroke="#444" stroke-width="1.2"/></svg>
<svg class="b" style="left:1013px;top:6.5px;" width="14" height="12" viewBox="0 0 14 12"><path d="M0.3 0.5 H13.7 L8.6 6.2 V11.8 L5.4 9.8 V6.2 Z" fill="#3479c1"/></svg>
<svg class="b" style="left:113px;top:31.5px;" width="10" height="10" viewBox="0 0 10 10"><g fill="none" stroke="#a8a8a8" stroke-width="1.1"><circle cx="3.9" cy="3.9" r="3.1"/><path d="M6.2 6.2 L9.2 9.2"/></g></svg>
<svg class="b" style="left:213px;top:31.5px;" width="10" height="10" viewBox="0 0 10 10"><g fill="none" stroke="#a8a8a8" stroke-width="1.1"><circle cx="3.9" cy="3.9" r="3.1"/><path d="M6.2 6.2 L9.2 9.2"/></g></svg>
<svg class="b" style="left:343px;top:31.5px;" width="10" height="10" viewBox="0 0 10 10"><g fill="none" stroke="#a8a8a8" stroke-width="1.1"><circle cx="3.9" cy="3.9" r="3.1"/><path d="M6.2 6.2 L9.2 9.2"/></g></svg>
<svg class="b" style="left:593px;top:31.5px;" width="10" height="10" viewBox="0 0 10 10"><g fill="none" stroke="#a8a8a8" stroke-width="1.1"><circle cx="3.9" cy="3.9" r="3.1"/><path d="M6.2 6.2 L9.2 9.2"/></g></svg>
<svg class="b" style="left:733px;top:31.5px;" width="10" height="10" viewBox="0 0 10 10"><g fill="none" stroke="#a8a8a8" stroke-width="1.1"><circle cx="3.9" cy="3.9" r="3.1"/><path d="M6.2 6.2 L9.2 9.2"/></g></svg>
<svg class="b" style="left:843px;top:31.5px;" width="10" height="10" viewBox="0 0 10 10"><g fill="none" stroke="#a8a8a8" stroke-width="1.1"><circle cx="3.9" cy="3.9" r="3.1"/><path d="M6.2 6.2 L9.2 9.2"/></g></svg>
<svg class="b" style="left:1118px;top:31.5px;" width="10" height="10" viewBox="0 0 10 10"><g fill="none" stroke="#a8a8a8" stroke-width="1.1"><circle cx="3.9" cy="3.9" r="3.1"/><path d="M6.2 6.2 L9.2 9.2"/></g></svg>
<div class="b" style="left:4px;top:51px;width:16px;height:16px;border:2px solid #5a5a5a;border-radius:4px;background:#fff"></div>
<svg class="b" style="left:28.799999999999997px;top:53.5px;" width="12" height="12" viewBox="0 0 12 12"><path d="M1 11 L1.4 8.6 L8.8 1.2 L10.8 3.2 L3.4 10.6 Z" fill="none" stroke="#7a7a7a" stroke-width="1.3"/><path d="M8 2 L10 4" stroke="#7a7a7a" stroke-width="1.8"/></svg>
<div class="b" style="left:41px;top:47.5px;width:27px;height:25.0px;border:2.5px solid #e8141a;background:transparent"></div>
<div class="b" style="left:46.5px;top:51px;width:17.0px;height:17.5px;background:#cdcdcd;border-radius:3px"></div>
<svg class="b" style="left:50px;top:53.5px;" width="10" height="12" viewBox="0 0 10 12"><path d="M0.3 1.6 H9.7" stroke="#7a7a7a" stroke-width="1.3"/><path d="M3.2 1 V0.4 H6.8 V1" stroke="#7a7a7a" stroke-width="1"/><path d="M1.3 2.2 L1.9 11 H8.1 L8.7 2.2" fill="none" stroke="#7a7a7a" stroke-width="1.3"/><path d="M4 3.8 V9.4 M6 3.8 V9.4" stroke="#7a7a7a" stroke-width="1"/></svg>
<div class="b" style="left:73.6px;top:54.60000000000002px;width:2.4px;height:2.4px;border-radius:50%;background:#555"></div>
<div class="b" style="left:73.6px;top:58.30000000000001px;width:2.4px;height:2.4px;border-radius:50%;background:#555"></div>
<div class="b" style="left:73.6px;top:62.0px;width:2.4px;height:2.4px;border-radius:50%;background:#555"></div>
<svg class="b" style="left:945px;top:54.5px;" width="10" height="10.5" viewBox="0 0 10 10.5"><path d="M5 0.3 V9.5 M0.8 5.5 L5 9.6 L9.2 5.5" fill="none" stroke="#4caf50" stroke-width="1.3"/></svg>
<svg class="b" style="left:963.5px;top:53.0px;" width="14" height="13" viewBox="0 0 14 13"><path d="M10.8 2.3 A5.8 5.8 0 1 0 12.4 5.2" fill="none" stroke="#666" stroke-width="1.2"/><path d="M3.8 6.6 L6.2 8.9 L12.7 1.8" fill="none" stroke="#666" stroke-width="1.2"/></svg>
<div class="b" style="left:4px;top:75px;width:16px;height:16px;border:2px solid #5a5a5a;border-radius:4px;background:#fff"></div>
<svg class="b" style="left:28.799999999999997px;top:77.5px;" width="12" height="12" viewBox="0 0 12 12"><path d="M1 11 L1.4 8.6 L8.8 1.2 L10.8 3.2 L3.4 10.6 Z" fill="none" stroke="#7a7a7a" stroke-width="1.3"/><path d="M8 2 L10 4" stroke="#7a7a7a" stroke-width="1.8"/></svg>
<svg class="b" style="left:50px;top:77.5px;" width="10" height="12" viewBox="0 0 10 12"><path d="M0.3 1.6 H9.7" stroke="#7a7a7a" stroke-width="1.3"/><path d="M3.2 1 V0.4 H6.8 V1" stroke="#7a7a7a" stroke-width="1"/><path d="M1.3 2.2 L1.9 11 H8.1 L8.7 2.2" fill="none" stroke="#7a7a7a" stroke-width="1.3"/><path d="M4 3.8 V9.4 M6 3.8 V9.4" stroke="#7a7a7a" stroke-width="1"/></svg>
<div class="b" style="left:73.6px;top:78.60000000000002px;width:2.4px;height:2.4px;border-radius:50%;background:#555"></div>
<div class="b" style="left:73.6px;top:82.30000000000001px;width:2.4px;height:2.4px;border-radius:50%;background:#555"></div>
<div class="b" style="left:73.6px;top:86.0px;width:2.4px;height:2.4px;border-radius:50%;background:#555"></div>
<svg class="b" style="left:945px;top:78.5px;" width="10" height="10.5" viewBox="0 0 10 10.5"><path d="M5 0.3 V9.5 M0.8 5.5 L5 9.6 L9.2 5.5" fill="none" stroke="#4caf50" stroke-width="1.3"/></svg>
<svg class="b" style="left:963.5px;top:77.0px;" width="14" height="13" viewBox="0 0 14 13"><path d="M10.8 2.3 A5.8 5.8 0 1 0 12.4 5.2" fill="none" stroke="#666" stroke-width="1.2"/><path d="M3.8 6.6 L6.2 8.9 L12.7 1.8" fill="none" stroke="#666" stroke-width="1.2"/></svg>
<div class="b" style="left:4px;top:99px;width:16px;height:16px;border:2px solid #5a5a5a;border-radius:4px;background:#fff"></div>
<svg class="b" style="left:28.799999999999997px;top:101.0px;" width="12" height="12" viewBox="0 0 12 12"><path d="M1 11 L1.4 8.6 L8.8 1.2 L10.8 3.2 L3.4 10.6 Z" fill="none" stroke="#7a7a7a" stroke-width="1.3"/><path d="M8 2 L10 4" stroke="#7a7a7a" stroke-width="1.8"/></svg>
<svg class="b" style="left:50px;top:101.0px;" width="10" height="12" viewBox="0 0 10 12"><path d="M0.3 1.6 H9.7" stroke="#7a7a7a" stroke-width="1.3"/><path d="M3.2 1 V0.4 H6.8 V1" stroke="#7a7a7a" stroke-width="1"/><path d="M1.3 2.2 L1.9 11 H8.1 L8.7 2.2" fill="none" stroke="#7a7a7a" stroke-width="1.3"/><path d="M4 3.8 V9.4 M6 3.8 V9.4" stroke="#7a7a7a" stroke-width="1"/></svg>
<div class="b" style="left:73.6px;top:102.10000000000002px;width:2.4px;height:2.4px;border-radius:50%;background:#555"></div>
<div class="b" style="left:73.6px;top:105.80000000000001px;width:2.4px;height:2.4px;border-radius:50%;background:#555"></div>
<div class="b" style="left:73.6px;top:109.5px;width:2.4px;height:2.4px;border-radius:50%;background:#555"></div>
<svg class="b" style="left:945px;top:102.0px;" width="10" height="10.5" viewBox="0 0 10 10.5"><path d="M5 0.3 V9.5 M0.8 5.5 L5 9.6 L9.2 5.5" fill="none" stroke="#4caf50" stroke-width="1.3"/></svg>
<svg class="b" style="left:963.5px;top:100.5px;" width="14" height="13" viewBox="0 0 14 13"><path d="M10.8 2.3 A5.8 5.8 0 1 0 12.4 5.2" fill="none" stroke="#666" stroke-width="1.2"/><path d="M3.8 6.6 L6.2 8.9 L12.7 1.8" fill="none" stroke="#666" stroke-width="1.2"/></svg>
<div class="b" style="left:4px;top:123px;width:16px;height:16px;border:2px solid #5a5a5a;border-radius:4px;background:#fff"></div>
<svg class="b" style="left:28.799999999999997px;top:125.0px;" width="12" height="12" viewBox="0 0 12 12"><path d="M1 11 L1.4 8.6 L8.8 1.2 L10.8 3.2 L3.4 10.6 Z" fill="none" stroke="#7a7a7a" stroke-width="1.3"/><path d="M8 2 L10 4" stroke="#7a7a7a" stroke-width="1.8"/></svg>
<svg class="b" style="left:50px;top:125.0px;" width="10" height="12" viewBox="0 0 10 12"><path d="M0.3 1.6 H9.7" stroke="#7a7a7a" stroke-width="1.3"/><path d="M3.2 1 V0.4 H6.8 V1" stroke="#7a7a7a" stroke-width="1"/><path d="M1.3 2.2 L1.9 11 H8.1 L8.7 2.2" fill="none" stroke="#7a7a7a" stroke-width="1.3"/><path d="M4 3.8 V9.4 M6 3.8 V9.4" stroke="#7a7a7a" stroke-width="1"/></svg>
<div class="b" style="left:73.6px;top:126.10000000000002px;width:2.4px;height:2.4px;border-radius:50%;background:#555"></div>
<div class="b" style="left:73.6px;top:129.8px;width:2.4px;height:2.4px;border-radius:50%;background:#555"></div>
<div class="b" style="left:73.6px;top:133.5px;width:2.4px;height:2.4px;border-radius:50%;background:#555"></div>
<svg class="b" style="left:945px;top:126.0px;" width="10" height="10.5" viewBox="0 0 10 10.5"><path d="M5 0.3 V9.5 M0.8 5.5 L5 9.6 L9.2 5.5" fill="none" stroke="#4caf50" stroke-width="1.3"/></svg>
<svg class="b" style="left:963.5px;top:124.5px;" width="14" height="13" viewBox="0 0 14 13"><path d="M10.8 2.3 A5.8 5.8 0 1 0 12.4 5.2" fill="none" stroke="#666" stroke-width="1.2"/><path d="M3.8 6.6 L6.2 8.9 L12.7 1.8" fill="none" stroke="#666" stroke-width="1.2"/></svg>
<div class="b" style="left:4px;top:147px;width:16px;height:16px;border:2px solid #5a5a5a;border-radius:4px;background:#fff"></div>
<svg class="b" style="left:28.799999999999997px;top:148.5px;" width="12" height="12" viewBox="0 0 12 12"><path d="M1 11 L1.4 8.6 L8.8 1.2 L10.8 3.2 L3.4 10.6 Z" fill="none" stroke="#7a7a7a" stroke-width="1.3"/><path d="M8 2 L10 4" stroke="#7a7a7a" stroke-width="1.8"/></svg>
<svg class="b" style="left:50px;top:148.5px;" width="10" height="12" viewBox="0 0 10 12"><path d="M0.3 1.6 H9.7" stroke="#7a7a7a" stroke-width="1.3"/><path d="M3.2 1 V0.4 H6.8 V1" stroke="#7a7a7a" stroke-width="1"/><path d="M1.3 2.2 L1.9 11 H8.1 L8.7 2.2" fill="none" stroke="#7a7a7a" stroke-width="1.3"/><path d="M4 3.8 V9.4 M6 3.8 V9.4" stroke="#7a7a7a" stroke-width="1"/></svg>
<div class="b" style="left:73.6px;top:149.60000000000002px;width:2.4px;height:2.4px;border-radius:50%;background:#555"></div>
<div class="b" style="left:73.6px;top:153.3px;width:2.4px;height:2.4px;border-radius:50%;background:#555"></div>
<div class="b" style="left:73.6px;top:157.0px;width:2.4px;height:2.4px;border-radius:50%;background:#555"></div>
<svg class="b" style="left:945px;top:149.5px;" width="10" height="10.5" viewBox="0 0 10 10.5"><path d="M5 0.3 V9.5 M0.8 5.5 L5 9.6 L9.2 5.5" fill="none" stroke="#4caf50" stroke-width="1.3"/></svg>
<svg class="b" style="left:963.5px;top:148.0px;" width="14" height="13" viewBox="0 0 14 13"><path d="M10.8 2.3 A5.8 5.8 0 1 0 12.4 5.2" fill="none" stroke="#666" stroke-width="1.2"/><path d="M3.8 6.6 L6.2 8.9 L12.7 1.8" fill="none" stroke="#666" stroke-width="1.2"/></svg>
<div class="b" style="left:4px;top:169px;width:16px;height:16px;border:2px solid #5a5a5a;border-radius:4px;background:#fff"></div>
<svg class="b" style="left:28.799999999999997px;top:171.5px;" width="12" height="12" viewBox="0 0 12 12"><path d="M1 11 L1.4 8.6 L8.8 1.2 L10.8 3.2 L3.4 10.6 Z" fill="none" stroke="#7a7a7a" stroke-width="1.3"/><path d="M8 2 L10 4" stroke="#7a7a7a" stroke-width="1.8"/></svg>
<svg class="b" style="left:50px;top:171.5px;" width="10" height="12" viewBox="0 0 10 12"><path d="M0.3 1.6 H9.7" stroke="#7a7a7a" stroke-width="1.3"/><path d="M3.2 1 V0.4 H6.8 V1" stroke="#7a7a7a" stroke-width="1"/><path d="M1.3 2.2 L1.9 11 H8.1 L8.7 2.2" fill="none" stroke="#7a7a7a" stroke-width="1.3"/><path d="M4 3.8 V9.4 M6 3.8 V9.4" stroke="#7a7a7a" stroke-width="1"/></svg>
<svg class="b" style="left:69px;top:171.0px;" width="11" height="13" viewBox="0 0 11 13"><g fill="none" stroke="#7a7a7a" stroke-width="1.3"><path d="M5.5 12.8 V8 Q5.5 6.5 4 5 L2 2.6 M5.5 8 Q5.5 6.5 7 5 L9 2.6"/></g><path d="M0.2 0.2 L4 1.2 L1.2 4 Z M10.8 0.2 L7 1.2 L9.8 4 Z" fill="#7a7a7a"/></svg>
<div class="b" style="left:93.7px;top:172.60000000000002px;width:2.4px;height:2.4px;border-radius:50%;background:#555"></div>
<div class="b" style="left:93.7px;top:176.3px;width:2.4px;height:2.4px;border-radius:50%;background:#555"></div>
<div class="b" style="left:93.7px;top:180.0px;width:2.4px;height:2.4px;border-radius:50%;background:#555"></div>
<svg class="b" style="left:945px;top:172.5px;" width="10" height="10.5" viewBox="0 0 10 10.5"><path d="M5 0.3 V9.5 M0.8 5.5 L5 9.6 L9.2 5.5" fill="none" stroke="#4caf50" stroke-width="1.3"/></svg>
<svg class="b" style="left:963.5px;top:171.0px;" width="14" height="13" viewBox="0 0 14 13"><path d="M10.8 2.3 A5.8 5.8 0 1 0 12.4 5.2" fill="none" stroke="#666" stroke-width="1.2"/><path d="M3.8 6.6 L6.2 8.9 L12.7 1.8" fill="none" stroke="#666" stroke-width="1.2"/></svg>
<div class="b" style="left:4px;top:193px;width:16px;height:16px;border:2px solid #5a5a5a;border-radius:4px;background:#fff"></div>
<svg class="b" style="left:28.799999999999997px;top:194.5px;" width="12" height="12" viewBox="0 0 12 12"><path d="M1 11 L1.4 8.6 L8.8 1.2 L10.8 3.2 L3.4 10.6 Z" fill="none" stroke="#7a7a7a" stroke-width="1.3"/><path d="M8 2 L10 4" stroke="#7a7a7a" stroke-width="1.8"/></svg>
<svg class="b" style="left:50px;top:194.5px;" width="10" height="12" viewBox="0 0 10 12"><path d="M0.3 1.6 H9.7" stroke="#7a7a7a" stroke-width="1.3"/><path d="M3.2 1 V0.4 H6.8 V1" stroke="#7a7a7a" stroke-width="1"/><path d="M1.3 2.2 L1.9 11 H8.1 L8.7 2.2" fill="none" stroke="#7a7a7a" stroke-width="1.3"/><path d="M4 3.8 V9.4 M6 3.8 V9.4" stroke="#7a7a7a" stroke-width="1"/></svg>
<div class="b" style="left:73.6px;top:195.5999999999999px;width:2.4px;height:2.4px;border-radius:50%;background:#555"></div>
<div class="b" style="left:73.6px;top:199.29999999999995px;width:2.4px;height:2.4px;border-radius:50%;background:#555"></div>
<div class="b" style="left:73.6px;top:202.9999999999999px;width:2.4px;height:2.4px;border-radius:50%;background:#555"></div>
<svg class="b" style="left:945px;top:195.5px;" width="10" height="10.5" viewBox="0 0 10 10.5"><path d="M5 0.3 V9.5 M0.8 5.5 L5 9.6 L9.2 5.5" fill="none" stroke="#4caf50" stroke-width="1.3"/></svg>
<svg class="b" style="left:963.5px;top:194.0px;" width="14" height="13" viewBox="0 0 14 13"><path d="M10.8 2.3 A5.8 5.8 0 1 0 12.4 5.2" fill="none" stroke="#666" stroke-width="1.2"/><path d="M3.8 6.6 L6.2 8.9 L12.7 1.8" fill="none" stroke="#666" stroke-width="1.2"/></svg>
<svg class="b" style="left:522px;top:192px;" width="15" height="15" viewBox="0 0 15 15"><path d="M7.3 14.5 V9.5 Q7.3 7.6 9 6.3 Q10.8 5 10.8 3.2" fill="none" stroke="#ffb700" stroke-width="2.6"/><path d="M6.5 6.5 L5 5" stroke="#ffb700" stroke-width="2.2"/><path d="M0 4 L3.5 0.3 L7 4 Z M7.3 4 L10.8 0.3 L14.3 4 Z" fill="#ffb700"/></svg>
</div>
<div class="b" style="left:28px;top:536px;width:654px;height:6px;background:#d3d7db;border-radius:3px"></div>
<div class="b" style="left:19px;top:556px;width:1238px;height:26px;border:1px solid #ebebeb;border-radius:4px;background:#fff"></div>
<div class="t" style="left:55.30px;top:563.84px;font-size:12px;color:#222;font-weight:bold;">Reservas</div>
<div class="b" style="left:19px;top:588px;width:1238px;height:26px;border:1px solid #ebebeb;border-radius:4px;background:#fff"></div>
<div class="t" style="left:55.30px;top:595.59px;font-size:12px;color:#222;font-weight:bold;">Projeções de uso</div>
<div class="b" style="left:19px;top:620px;width:1238px;height:25px;border:1px solid #ebebeb;border-radius:4px;background:#fff"></div>
<div class="t" style="left:55.30px;top:627.34px;font-size:12px;color:#222;font-weight:bold;">Aparas</div>
<div class="b" style="left:19px;top:651px;width:1238px;height:26px;border:1px solid #ebebeb;border-radius:4px;background:#fff"></div>
<div class="t" style="left:55.30px;top:659.09px;font-size:12px;color:#222;font-weight:bold;">Retirada de materiais</div>
<div class="b" style="left:19px;top:683px;width:1238px;height:26px;border:1px solid #ebebeb;border-radius:4px;background:#fff"></div>
<div class="t" style="left:55.30px;top:690.84px;font-size:12px;color:#222;font-weight:bold;">Conclusões</div>
<div class="b" style="left:19px;top:715px;width:1238px;height:26px;border:1px solid #ebebeb;border-radius:4px;background:#fff"></div>
<div class="t" style="left:55.30px;top:722.59px;font-size:12px;color:#222;font-weight:bold;">Custos de mão de obra</div>
<div class="b" style="left:19px;top:746px;width:1238px;height:26px;border:1px solid #ebebeb;border-radius:4px;background:#fff"></div>
<div class="t" style="left:55.30px;top:754.34px;font-size:12px;color:#222;font-weight:bold;">Outros dados</div>
<svg class="b" style="left:33.6px;top:567.0px;" width="7" height="5" viewBox="0 0 7 5"><path d="M0.8 0.8 L3.5 3.6 L6.2 0.8" fill="none" stroke="#222" stroke-width="1.7"/></svg>
<svg class="b" style="left:33.6px;top:598.75px;" width="7" height="5" viewBox="0 0 7 5"><path d="M0.8 0.8 L3.5 3.6 L6.2 0.8" fill="none" stroke="#222" stroke-width="1.7"/></svg>
<svg class="b" style="left:33.6px;top:630.5px;" width="7" height="5" viewBox="0 0 7 5"><path d="M0.8 0.8 L3.5 3.6 L6.2 0.8" fill="none" stroke="#222" stroke-width="1.7"/></svg>
<svg class="b" style="left:33.6px;top:662.25px;" width="7" height="5" viewBox="0 0 7 5"><path d="M0.8 0.8 L3.5 3.6 L6.2 0.8" fill="none" stroke="#222" stroke-width="1.7"/></svg>
<svg class="b" style="left:33.6px;top:694.0px;" width="7" height="5" viewBox="0 0 7 5"><path d="M0.8 0.8 L3.5 3.6 L6.2 0.8" fill="none" stroke="#222" stroke-width="1.7"/></svg>
<svg class="b" style="left:33.6px;top:725.75px;" width="7" height="5" viewBox="0 0 7 5"><path d="M0.8 0.8 L3.5 3.6 L6.2 0.8" fill="none" stroke="#222" stroke-width="1.7"/></svg>
<svg class="b" style="left:33.6px;top:757.5px;" width="7" height="5" viewBox="0 0 7 5"><path d="M0.8 0.8 L3.5 3.6 L6.2 0.8" fill="none" stroke="#222" stroke-width="1.7"/></svg>
<div class="b" style="left:19px;top:778px;width:1238px;height:22px;border:1px solid #e6e6e6;border-bottom:none;border-radius:4px 4px 0 0;background:#fff;-webkit-mask-image:linear-gradient(#000 0,#000 4px,transparent 18px)"></div>
<div class="b" style="left:24px;top:787px;width:87px;height:24px;background:#5cb85c;border-radius:4px;box-shadow:0 1px 2px rgba(0,0,0,.3)"></div>
<div class="t" style="left:52.00px;top:792.10px;font-size:13px;color:#fff;font-weight:bold;">Concluir</div>
<div class="b" style="left:116px;top:787px;width:92px;height:24px;background:#5cb85c;border-radius:4px;box-shadow:0 1px 2px rgba(0,0,0,.3)"></div>
<div class="b" style="left:188.6px;top:787px;width:1.0px;height:24px;background:#e8f5e8"></div>
<div class="t" style="left:143.60px;top:792.10px;font-size:13px;color:#fff;font-weight:bold;">Salvar</div>
<div class="b" style="left:213px;top:787px;width:87px;height:24px;background:#fff;border-radius:4px;box-shadow:0 0 1px rgba(0,0,0,.22),0 1px 2px rgba(0,0,0,.18)"></div>
<div class="t" style="left:241.30px;top:792.10px;font-size:13px;color:#3a3a3a;font-weight:bold;">Imprimir</div>
<div class="b" style="left:305px;top:787px;width:90px;height:24px;background:#fff;border-radius:4px;box-shadow:0 0 1px rgba(0,0,0,.22),0 1px 2px rgba(0,0,0,.18)"></div>
<div class="t" style="left:333.70px;top:792.10px;font-size:13px;color:#3a3a3a;font-weight:bold;">Cancelar</div>
<div class="t" style="left:1258.00px;top:785.83px;transform:translateX(-100%);font-size:10.6px;color:#777;font-weight:normal;">Criado em 24/07/2025 10:15:51 por Samuel Gonçalves do Nascimento (MAXIPROD).</div>
<div class="t" style="left:1258.00px;top:799.63px;transform:translateX(-100%);font-size:10.6px;color:#777;font-weight:normal;">Alterado em 24/07/2025 10:54:09 por Samuel Gonçalves do Nascimento (MAXIPROD).</div>
<svg class="b" style="left:33.5px;top:793.5px;" width="13" height="11" viewBox="0 0 13 11"><path d="M1 5.8 L4.6 9.3 L12 1.6" fill="none" stroke="#fff" stroke-width="1.9"/></svg>
<svg class="b" style="left:124.5px;top:793px;" width="14" height="13" viewBox="0 0 14 13"><path d="M1.5 0.5 H10 L13 3.5 V11.5 Q13 12.5 12 12.5 H1.5 Q0.5 12.5 0.5 11.5 V1.5 Q0.5 0.5 1.5 0.5 Z" fill="#fff"/><rect x="2.4" y="2" width="7" height="3.2" fill="#5cb85c"/><circle cx="6.8" cy="8.6" r="1.8" fill="#5cb85c"/></svg>
<svg class="b" style="left:195.2px;top:798px;" width="7" height="3.6" viewBox="0 0 7 3.6"><path d="M0 0 H7 L3.5 3.6 Z" fill="#fff"/></svg>
<svg class="b" style="left:221.5px;top:792px;" width="14.5" height="13" viewBox="0 0 14.5 13"><rect x="3.5" y="0.3" width="7.5" height="3" fill="#222"/><path d="M1.5 3.8 H13 Q14.3 3.8 14.3 5 V9.8 H11.5 V12.6 H3 V9.8 H0.2 V5 Q0.2 3.8 1.5 3.8 Z" fill="#222"/><rect x="4.5" y="8" width="5.5" height="3.3" fill="#fff"/></svg>
<svg class="b" style="left:316.5px;top:794px;" width="10" height="10" viewBox="0 0 10 10"><path d="M0.6 0.6 L9.4 9.4 M9.4 0.6 L0.6 9.4" stroke="#333" stroke-width="1.5"/></svg>
</body></html>
